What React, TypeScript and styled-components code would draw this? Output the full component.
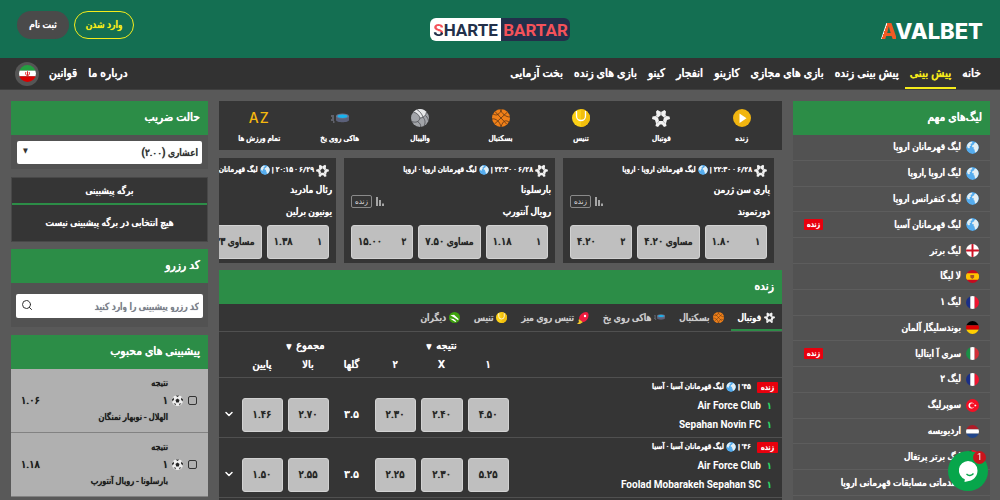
import React from "react";
import styled, { createGlobalStyle, css } from "styled-components";
import { ChevronDown, Search } from "lucide-react";

const Global = createGlobalStyle`
  *, *::before, *::after { box-sizing: border-box; }
  html { scrollbar-width: none; }
  body {
    margin: 0;
    background: #595959;
    color: #fff;
    font-family: Roboto, "DejaVu Sans Condensed", "DejaVu Sans", sans-serif;
    font-size: 11px;
    line-height: 16px;
  }
  button, input, select { font: inherit; color: inherit; margin: 0; }
  button { border: 0; padding: 0; cursor: pointer; background: none; }
  a { color: inherit; text-decoration: none; }
  ul { list-style: none; margin: 0; padding: 0; }
  h2 { margin: 0; }
  svg { display: block; flex: none; }
`;

/* Firm text: regular letterforms with a doubled edge, lighter than true bold. */
const firm = css`
  font-weight: 400;
  text-shadow: 0 0 0 currentColor, 0 0 1px currentColor;
`;

const Page = styled.div`
  direction: rtl;
  min-height: 100vh;
  overflow: hidden;
`;

/* ---------- header ---------- */

const Header = styled.header`
  display: grid;
  grid-template-columns: 1fr auto 1fr;
  align-items: start;
  height: 58px;
  padding: 0 17px;
  background: #146f52;
`;

const Brand = styled.a`
  justify-self: start;
  padding-top: 18px;
  direction: ltr;
  font: 800 22px/26px Inter, sans-serif;
`;

const BrandMark = styled.span`
  color: transparent;
  background: linear-gradient(110deg, #fff 36%, #f15a24 37%);
  background-clip: text;
`;

const Partner = styled.a`
  display: flex;
  direction: ltr;
  height: 23px;
  margin-top: 18px;
  border-radius: 6px;
  overflow: hidden;
  font: 700 17px/24px Roboto, sans-serif;
`;

const PartnerHalf = styled.span<{ $dark?: boolean }>`
  width: ${(p) => (p.$dark ? 69 : 71)}px;
  text-align: center;
  white-space: nowrap;
  color: ${(p) => (p.$dark ? "#f4525a" : "#22304a")};
  background: ${(p) => (p.$dark ? "#22304a" : "#fff")};
`;

const PartnerMark = styled.span`
  color: transparent;
  background: linear-gradient(200deg, #f4525a 55%, #22304a 56%);
  background-clip: text;
`;

const Account = styled.div`
  justify-self: end;
  display: flex;
  gap: 5px;
  padding-top: 11px;
`;

const AccountButton = styled.button<{ $outline?: boolean }>`
  height: 28px;
  width: ${(p) => (p.$outline ? 60 : 52)}px;
  border-radius: 14px;
  font-size: 10px;
  ${firm}
  ${(p) =>
    p.$outline
      ? css`border: 1px solid #f5ec1b; color: #f5ec1b;`
      : css`background: #4a4a4a; color: #fff;`}
`;

const Nav = styled.nav`
  display: flex;
  align-items: stretch;
  gap: 1px;
  height: 32px;
  padding: 0 14px 0 15px;
  background: #323232;
  border-bottom: 1px solid #3f3f3f;
`;

const NavLink = styled.a<{ $active?: boolean }>`
  padding: 0 5px;
  font-size: 12px;
  line-height: 31px;
  ${firm}
  white-space: nowrap;
  color: ${(p) => (p.$active ? "#f5ec1b" : "#fff")};
  ${(p) => p.$active && css`border-bottom: 2px solid #f5ec1b;`}
`;

const NavSpacer = styled.span`
  flex: 1;
`;

const LanguageButton = styled.button`
  align-self: center;
  display: grid;
  place-items: center;
  width: 24px;
  height: 24px;
  margin-right: 4px;
  border-radius: 50%;
  background: #555;
`;

/* ---------- shared ---------- */

const Columns = styled.div`
  display: grid;
  grid-template-columns: 197px minmax(0, 1fr) 197px;
  gap: 11px;
  align-items: start;
  padding: 11px 10px 0 11px;
`;

const Stack = styled.div`
  display: flex;
  flex-direction: column;
  gap: 8px;
  min-width: 0;
`;

const Panel = styled.section`
  background: #525252;
`;

const Title = styled.h2`
  display: block;
  height: 34px;
  padding: 0 8px;
  background: #2c8d47;
  font-size: 12px;
  line-height: 33px;
  ${firm}
`;

const LiveTag = styled.span<{ $wide?: boolean }>`
  padding: 0 ${(p) => (p.$wide ? 4 : 3)}px;
  border-radius: 1px;
  background: #e8000d;
  color: #fff;
  font-size: 8px;
  line-height: 11px;
  ${firm}
`;

const Round = styled.svg`
  border-radius: 50%;
`;

/* ---------- leagues ---------- */

const LeaguePanel = styled(Panel)`
  padding-bottom: 24px;
`;

const LeagueList = styled.ul`
  display: grid;
  grid-auto-rows: 1fr;
  height: 361px;
`;

const League = styled.li`
  display: flex;
  align-items: center;
  gap: 5px;
  padding: 0 11px;
  border-bottom: 1px solid #5d5d5d;
  font-size: 10px;
  ${firm}
  white-space: nowrap;

  ${LiveTag} { margin-right: auto; }
`;

/* ---------- sports bar ---------- */

const Sports = styled.nav`
  display: grid;
  grid-template-columns: repeat(7, 1fr);
  height: 49px;
  background: #353535;
`;

const Sport = styled.a`
  display: grid;
  grid-template-rows: 18px 12px;
  place-items: center;
  align-content: start;
  gap: 6px;
  padding-top: 8px;
  font-size: 8px;
  line-height: 12px;
  ${firm}
`;

const AllSports = styled.span`
  font: 500 14px/18px Inter, sans-serif;
  letter-spacing: 1px;
  text-shadow: none;
  color: #f5b80e;
  direction: ltr;
`;

/* ---------- match cards ---------- */

const Carousel = styled.div`
  display: flex;
  gap: 8px;
  padding-right: 8px;
  overflow: hidden;
`;

const Card = styled.article`
  flex: 0 0 211px;
  height: 105px;
  padding: 5px 7px 0;
  background: #353535;
`;

const CardMeta = styled.div`
  display: flex;
  align-items: center;
  gap: 2px;
  height: 14px;
  font-size: 8px;
  ${firm}
  white-space: nowrap;
`;

const CardBody = styled.div`
  display: flex;
  align-items: center;
  gap: 4px;
  height: 48px;
`;

const CardTeams = styled.div`
  flex: 1;
  margin-right: -3px;
  font-size: 10px;
  line-height: 22px;
  ${firm}
`;

const LiveOutline = styled.span`
  padding: 0 3px;
  border: 1px solid #8a8a8a;
  border-radius: 2px;
  font-size: 8px;
  line-height: 11px;
  color: #ddd;
`;

const CardOdds = styled.div`
  display: grid;
  grid-template-columns: repeat(3, 1fr);
  gap: 5px;
`;

const oddsSurface = css`
  height: 34px;
  border: 1px solid #d2d2d2;
  border-radius: 3px;
  background: #bfbfbf;
  color: #262626;
  font-size: 11px;
  ${firm}
`;

const CardOdd = styled.button`
  ${oddsSurface}
  display: flex;
  justify-content: space-between;
  align-items: center;
  padding: 0 6px;

  span:first-child { font-size: 10px; }
`;

/* ---------- live table ---------- */

const LivePanel = styled.section`
  margin-top: -1px;
  padding-bottom: 24px;
  background: #353535;
`;

const Tabs = styled.div`
  display: flex;
  height: 28px;
  border-bottom: 1px solid #505050;
`;

const Tab = styled.button<{ $active?: boolean }>`
  display: flex;
  align-items: center;
  gap: 3px;
  padding: 0 7px;
  font-size: 10px;
  color: ${(p) => (p.$active ? "#fff" : "#ccc")};
  white-space: nowrap;
  ${firm}
  ${(p) => p.$active && css`box-shadow: inset 0 -2px #2c8d47;`}
`;

const Table = styled.table`
  width: 100%;
  table-layout: fixed;
  border-collapse: collapse;
  text-align: center;

  th, td { padding: 0; }
  th { height: 18px; font-size: 11px; line-height: 18px; ${firm} }
  thead tr:first-child th { height: 23px; padding-top: 5px; }
  thead tr:last-child th { height: 21px; padding-bottom: 3px; }
  tbody tr { height: 60px; border-top: 1px solid #505050; }
  tbody tr:last-child { border-bottom: 1px solid #505050; }
`;

const Col = styled.col<{ $w?: number }>`
  ${(p) => p.$w && css`width: ${p.$w}px;`}
`;

const Sort = styled.button`
  ${firm}
`;

const Caret = styled.span`
  font-size: 7px;
  margin-right: 5px;
`;

const EventCell = styled.td`
  text-align: right;
  vertical-align: top;
`;

const EventMeta = styled.div`
  display: flex;
  align-items: center;
  gap: 2px;
  padding-right: 4px;
  height: 18px;
  font-size: 8px;
  ${firm}
  white-space: nowrap;

  ${LiveTag} { margin-left: 4px; }
`;

const Team = styled.div`
  display: flex;
  gap: 7px;
  padding-right: 10px;
  line-height: 19px;
  font-size: 10px;
  font-weight: 700;
`;

const Score = styled.span`
  width: 4px;
  color: #2fd467;
`;

const OddCell = styled.td`
  vertical-align: bottom;
`;

const Odd = styled.button`
  ${oddsSurface}
  display: block;
  width: calc(100% - 5px);
  margin: 0 auto 5px;
`;

const Goals = styled.td`
  && { padding-top: 14px; }
  font-size: 11px;
  font-weight: 700;
`;

const ExpandCell = styled.td`
  && { padding-top: 13px; }

  button { display: block; margin: 0 auto; }
`;

/* ---------- left column ---------- */

const Field = styled.div<{ $roomy?: boolean }>`
  position: relative;
  display: flex;
  padding: ${(p) => (p.$roomy ? "11px 5px 9px" : "6px 6px 5px")};
`;

const fieldSurface = css`
  width: 100%;
  border: 0;
  border-radius: 2px;
  background: #fff;
  color: #333;
  font-size: 10px;
`;

const Select = styled.select`
  ${fieldSurface}
  appearance: none;
  height: 23px;
  padding: 0 4px;
  ${firm}
`;

const SelectCaret = styled.span`
  position: absolute;
  left: 12px;
  top: 8px;
  font-size: 7px;
  color: #333;
  pointer-events: none;
`;

const CodeInput = styled.input`
  ${fieldSurface}
  height: 24px;
  padding: 0 4px 0 28px;

  &::placeholder { color: #7b7f8a; opacity: 1; ${firm} }
`;

const SearchButton = styled.button`
  position: absolute;
  left: 10px;
  top: 16px;
  color: #333;
`;

const Slip = styled.section`
  background: #353535;
  text-align: center;
  border: 1px solid #484848;
  margin-bottom: -1px;
`;

const SlipTab = styled.h2`
  height: 27px;
  border-bottom: 2px solid #2c8d47;
  font-size: 10px;
  line-height: 25px;
  ${firm}
`;

const SlipText = styled.p`
  margin: 0;
  font-size: 10px;
  line-height: 36px;
  ${firm}
`;

const Popular = styled.li`
  display: grid;
  grid-template-columns: auto auto 1fr auto;
  align-items: center;
  gap: 0 5px;
  height: 64px;
  padding: 0 11px 0 10px;
  border-bottom: 1px solid #828282;
  background: #b0b0b0;
  color: #1c1c1c;
  font-size: 11px;
  ${firm}
`;

const Check = styled.input`
  appearance: none;
  width: 9px;
  height: 9px;
  margin: 0;
  border: 1px solid #333;
  border-radius: 2px;
`;

const Pick = styled.label`
  margin-right: -1px;
  line-height: 17px;
`;

const Small = styled.span`
  display: block;
  font-size: 9px;
`;

/* ---------- chat ---------- */

const Chat = styled.button`
  position: fixed;
  right: 12px;
  bottom: 9px;
  display: grid;
  place-items: center;
  width: 40px;
  height: 40px;
  border-radius: 50%;
  background: #07a64b;
`;

const ChatCount = styled.span`
  position: absolute;
  top: 0;
  right: 2px;
  width: 13px;
  height: 13px;
  border-radius: 50%;
  background: #c8141b;
  color: #fff;
  font-size: 9px;
  line-height: 13px;
`;

/* ---------- drawings ---------- */

const Globe = ({ size = 13 }: { size?: number }) => (
  <Round width={size} height={size} viewBox="0 0 26 26" aria-hidden="true">
    <circle cx="13" cy="13" r="13" fill="#55acee" />
    <path d="M2 9C4 4 7 2 11 1l2 3-4 2 1 3-3 2 1 2-2 2-3-2zM13 8l3-1 1-3 3-1 5 6v6l-3 6-4 2-1-6-2-1 1-3-4-1z" fill="#e4eef2" />
  </Round>
);

const bands: Record<string, { colors: string[]; upright?: boolean }> = {
  fr: { colors: ["#1b2f86", "#fff", "#f0142f"], upright: true },
  it: { colors: ["#1a8f46", "#fff", "#d22f37"], upright: true },
  de: { colors: ["#000", "#dd0000", "#ffce00"] },
  nl: { colors: ["#ae1c28", "#fff", "#21468b"] },
  ir: { colors: ["#239f40", "#fff", "#da0000"] },
  es: { colors: ["#c60b1e", "#ffc400", "#c60b1e"] },
};

const Flag = ({ code, size = 13 }: { code: string; size?: number }) => {
  const band = bands[code];
  return (
    <Round width={size} height={size} viewBox="0 0 12 12" aria-hidden="true">
      {band?.colors.map((fill, i) =>
        band.upright ? (
          <rect key={i} x={i * 4} width="4" height="12" fill={fill} />
        ) : (
          <rect key={i} y={i * 4} width="12" height="4" fill={fill} />
        )
      )}
      {code === "es" && (
        <>
          <rect y="3" width="12" height="6" fill="#ffc400" />
          <path d="M4 4.500h3.500v2.500L5.800 8.200 4 7z" fill="#a5502a" />
        </>
      )}
      {code === "ir" && <path d="M6 4.400v3M4.800 5c-.6 2 .6 2.400 1.200 2.400S7.800 7 7.200 5" stroke="#da0000" strokeWidth=".6" fill="none" />}
      {code === "en" && (
        <>
          <rect width="12" height="12" fill="#fff" />
          <path d="M6 0v12M0 6h12" stroke="#ce1124" strokeWidth="1.800" />
        </>
      )}
      {code === "pt" && (
        <>
          <rect width="12" height="12" fill="#e8112d" />
          <rect width="5" height="12" fill="#046a38" />
        </>
      )}
      {code === "tr" && (
        <>
          <rect width="12" height="12" fill="#f50f24" />
          <circle cx="5" cy="6" r="2.700" fill="#fff" />
          <circle cx="5.800" cy="6" r="2.100" fill="#f50f24" />
          <path d="M8.600 4.800l.4.800.8.400-.8.400-.4.800-.3-.8-.8-.4.800-.4z" fill="#fff" />
        </>
      )}
    </Round>
  );
};

const Football = ({ size = 18 }: { size?: number }) => (
  <svg width={size} height={size} viewBox="0 0 36 36" aria-hidden="true">
    <path
      d="M11 2l7 4 7-4 3 3-1 7 2 2 6 1 1 5-6 2-2 7 1 5-5 2-4-5h-4l-4 5-5-2 1-5-2-7-6-2 1-5 6-1 2-2-1-7z"
      fill="#f2f2f2"
    />
    <path d="M18 12l6 5-2 7h-8l-2-7z" fill="#353535" />
    <path d="M18 12V6M24 17l5-3M22 24l4 5M14 24l-4 5M12 17l-5-3" stroke="#777" strokeWidth="1" />
  </svg>
);

const DarkFootball = () => (
  <svg width="11" height="11" viewBox="0 0 22 22" aria-hidden="true">
    <circle cx="11" cy="11" r="11" fill="#eee" />
    <path d="M11 7l4 3-1.500 5h-5L7 10zM7 1h8l-4 3zM0 9l3-4 1 4-3 4zM22 9l-3-4-1 4 3 4zM3 17l4 0 1 4zM19 17l-4 0-1 4z" fill="#222" />
  </svg>
);

const PlayIcon = () => (
  <svg width="18" height="18" viewBox="0 0 18 18" aria-hidden="true">
    <circle cx="9" cy="9" r="9" fill="#f1b510" />
    <path d="M6.500 4.500l7 4.700-7 4.700z" fill="#fff" />
  </svg>
);

const Tennis = ({ size = 18 }: { size?: number }) => (
  <svg width={size} height={size} viewBox="0 0 18 18" aria-hidden="true">
    <circle cx="9" cy="9" r="9" fill="#fcd116" />
    <path d="M9 0a9 9 0 0 1 0 18z" fill="#f2bf0d" />
    <path d="M4.500 2v5a4.500 4.500 0 0 0 9 0V2" stroke="#fff" strokeWidth="1.300" fill="none" />
  </svg>
);

const Basketball = ({ size = 18 }: { size?: number }) => (
  <svg width={size} height={size} viewBox="0 0 18 18" aria-hidden="true">
    <circle cx="9" cy="9" r="9" fill="#f08019" />
    <path
      d="M3 2.500l12 13M15.500 3L2.500 15M8 0c2 5 6 8 10 8M0 10c4-1 8 3 9 8M1 5c4 2 6 1 9-5M17 13c-3-2-6-2-8 5"
      stroke="#5a3314"
      strokeWidth=".8"
      fill="none"
    />
  </svg>
);

const Volleyball = () => (
  <svg width="18" height="18" viewBox="0 0 18 18" aria-hidden="true">
    <circle cx="9" cy="9" r="9" fill="#a2a4a9" />
    <path d="M2.500 3C6-1 12-1 15.500 3 15 6.500 12 9 9 9 8 6 6 4 2.500 3z" fill="#e6e7e9" />
    <path
      d="M9 9C8 6 6 4 2.500 3M12 8.200C11 5 9 2.500 6 .6M9 9c3 0 6-2 6.500-6M9 9c-1 4-4 5-8.500 3.500M6.500 12.500C9 14 10 16 9.500 18M12 8.200c2.500 3 2.500 6 1 9M14.500 6.500c2 2 3 4 3 6"
      stroke="#4b4d52"
      strokeWidth=".8"
      fill="none"
    />
  </svg>
);

const Puck = ({ width = 18 }: { width?: number }) => (
  <svg width={width} height={(width * 10) / 18} viewBox="0 0 18 10" aria-hidden="true">
    <path d="M5 3v4c0 3 13 3 13 0V3z" fill="#5b6079" />
    <ellipse cx="11.500" cy="3.200" rx="6.500" ry="2.600" fill="#6c728d" />
    <ellipse cx="11.500" cy="3.200" rx="5" ry="1.700" fill="#19b3ee" />
    <path d="M0 3h3M1 5h2M0 7h3M2 9h1.500" stroke="#8a8da0" strokeWidth="1" />
  </svg>
);

const Paddle = () => (
  <svg width="12" height="12" viewBox="0 0 12 12" aria-hidden="true">
    <path d="M3 9L0 12l3 0 3-2z" fill="#f3c62b" />
    <path d="M2 7c0-4 4-7 7-7 2 0 3 2 2.500 4C11 8 8 10 5.500 10z" fill="#ee1c3f" />
    <path d="M2 7l3.500 3L3 11 1.500 9z" fill="#f3c62b" />
    <circle cx="8" cy="4" r="1.200" fill="#fff" />
  </svg>
);

const Others = () => (
  <svg width="11" height="11" viewBox="0 0 12 12" aria-hidden="true">
    <circle cx="6" cy="6" r="6" fill="#3ea30e" />
    <path d="M1.500 3.500l4-.5 5 4.500-.5 1.500-4.500-3zM1 7l4 .5 3 2.500-1 1-3-2z" fill="#fff" />
  </svg>
);

const StatsIcon = () => (
  <svg width="9" height="10" viewBox="0 0 9 10" aria-hidden="true">
    <path d="M1 1v9M4 4v6M7 7.500V10" stroke="#ccc" strokeWidth="1.500" />
  </svg>
);

const ChatBubble = () => (
  <svg width="22" height="23" viewBox="0 0 22 23" aria-hidden="true">
    <path d="M11 1a9.500 9.500 0 0 1 9.500 9.500c0 5-3 8.500-6.500 10L7.500 22l.3-2.700A9.500 9.500 0 0 1 11 1z" fill="#fff" />
    <path d="M9.500 14c2 2.200 5 2 7-.5" stroke="#07a64b" strokeWidth="1.300" fill="none" />
  </svg>
);

/* ---------- data ---------- */

const navItems = ["خانه", "پیش بینی", "پیش بینی زنده", "بازی های مجازی", "کازینو", "انفجار", "کینو", "بازی های زنده", "بخت آزمایی"];

const leagues: { name: string; flag?: string; live?: boolean }[] = [
  { name: "لیگ قهرمانان اروپا" },
  { name: "لیگ اروپا ,اروپا" },
  { name: "لیگ کنفرانس اروپا" },
  { name: "لیگ قهرمانان آسیا", live: true },
  { name: "لیگ برتر", flag: "en" },
  { name: "لا لیگا", flag: "es" },
  { name: "لیگ ۱", flag: "fr" },
  { name: "بوندسلیگا, آلمان", flag: "de" },
  { name: "سری آ ایتالیا", flag: "it", live: true },
  { name: "لیگ ۲", flag: "fr" },
  { name: "سوپرلیگ", flag: "tr" },
  { name: "اردیویسه", flag: "nl" },
  { name: "لیگ برتر پرتغال", flag: "pt" },
  { name: "مقدماتی مسابقات قهرمانی اروپا" },
];

const sports: [React.ReactNode, string][] = [
  [<PlayIcon />, "زنده"],
  [<Football />, "فوتبال"],
  [<Tennis />, "تنیس"],
  [<Basketball />, "بسکتبال"],
  [<Volleyball />, "والیبال"],
  [<Puck />, "هاکی روی یخ"],
];

const cards = [
  { date: "۶/۲۸ · ۲۲:۳۰", home: "پاری سن ژرمن", away: "دورتموند", odds: ["۱.۸۰", "۴.۲۰", "۴.۲۰"], tools: true },
  { date: "۶/۲۸ · ۲۲:۳۰", home: "بارسلونا", away: "رویال آنتورپ", odds: ["۱.۱۸", "۷.۵۰", "۱۵.۰۰"], tools: true },
  { date: "۶/۲۹ · ۲۰:۱۵", home: "رئال مادرید", away: "یونیون برلین", odds: ["۱.۳۸", "۵.۳۳"], tools: false },
];
const outcomes = ["۱", "مساوی", "۲"];

const tabs: [React.ReactNode, string][] = [
  [<Football size={11} />, "فوتبال"],
  [<Basketball size={11} />, "بسکتبال"],
  [<Puck width={11} />, "هاکی روی یخ"],
  [<Paddle />, "تنیس روی میز"],
  [<Tennis size={11} />, "تنیس"],
  [<Others />, "دیگران"],
];

const matches = [
  { minute: "۴۵'", home: "Air Force Club", away: "Sepahan Novin FC", result: ["۴.۵۰", "۲.۴۰", "۲.۳۰"], total: ["۲.۷۰", "۱.۴۶"] },
  { minute: "۴۶'", home: "Air Force Club", away: "Foolad Mobarakeh Sepahan SC", result: ["۵.۲۵", "۲.۳۰", "۲.۲۵"], total: ["۲.۵۵", "۱.۵۰"] },
];

const popular = [
  { id: "pick-1", teams: "الهلال - نوبهار نمنگان", odd: "۱.۰۶" },
  { id: "pick-2", teams: "بارسلونا - رویال آنتورپ", odd: "۱.۱۸" },
];

export default function App() {
  return (
    <Page lang="fa">
      <Global />
      <Header>
        <Brand href="#">
          <BrandMark>A</BrandMark>VALBET
        </Brand>
        <Partner href="#">
          <PartnerHalf>
            <PartnerMark>S</PartnerMark>HARTE
          </PartnerHalf>
          <PartnerHalf $dark>BARTAR</PartnerHalf>
        </Partner>
        <Account>
          <AccountButton $outline>وارد شدن</AccountButton>
          <AccountButton>ثبت نام</AccountButton>
        </Account>
      </Header>
      <Nav>
        {navItems.map((item, i) => (
          <NavLink key={item} href="#" $active={i === 1}>{item}</NavLink>
        ))}
        <NavSpacer />
        <NavLink href="#">درباره ما</NavLink>
        <NavLink href="#">قوانین</NavLink>
        <LanguageButton aria-label="فارسی">
          <Flag code="ir" size={17} />
        </LanguageButton>
      </Nav>

      <Columns>
        <LeaguePanel>
          <Title>لیگ‌های مهم</Title>
          <LeagueList>
            {leagues.map((l) => (
              <League key={l.name}>
                {l.flag ? <Flag code={l.flag} /> : <Globe />}
                <a href="#">{l.name}</a>
                {l.live && <LiveTag>زنده</LiveTag>}
              </League>
            ))}
          </LeagueList>
        </LeaguePanel>

        <Stack as="main">
          <Sports>
            {sports.map(([icon, label]) => (
              <Sport key={label} href="#">{icon}<span>{label}</span></Sport>
            ))}
            <Sport href="#"><AllSports>AZ</AllSports><span>تمام ورزش ها</span></Sport>
          </Sports>

          <Carousel>
            {cards.map((c) => (
              <Card key={c.home}>
                <CardMeta>
                  <Football size={13} />
                  <span>{c.date} |</span>
                  <Globe size={10} />
                  <span>لیگ قهرمانان اروپا · اروپا</span>
                </CardMeta>
                <CardBody>
                  <CardTeams>
                    <div>{c.home}</div>
                    <div>{c.away}</div>
                  </CardTeams>
                  {c.tools && (
                    <>
                      <StatsIcon />
                      <LiveOutline>زنده</LiveOutline>
                    </>
                  )}
                </CardBody>
                <CardOdds>
                  {c.odds.map((o, i) => (
                    <CardOdd key={i}><span>{outcomes[i]}</span><span>{o}</span></CardOdd>
                  ))}
                </CardOdds>
              </Card>
            ))}
          </Carousel>

          <LivePanel>
            <Title>زنده</Title>
            <Tabs>
              {tabs.map(([icon, label], i) => (
                <Tab key={label} $active={i === 0}>{icon}{label}</Tab>
              ))}
            </Tabs>
            <Table>
              <colgroup>
                <Col /><Col $w={46} /><Col $w={47} /><Col $w={46} /><Col $w={41} /><Col $w={46} /><Col $w={46} /><Col $w={20} />
              </colgroup>
              <thead>
                <tr>
                  <th />
                  <th colSpan={3}><Sort>نتیجه<Caret>▼</Caret></Sort></th>
                  <th colSpan={3}><Sort>مجموع<Caret>▼</Caret></Sort></th>
                  <th />
                </tr>
                <tr>
                  <th />
                  <th>۱</th><th>X</th><th>۲</th><th>گلها</th><th>بالا</th><th>پایین</th>
                  <th />
                </tr>
              </thead>
              <tbody>
                {matches.map((m) => (
                  <tr key={m.away}>
                    <EventCell>
                      <EventMeta>
                        <LiveTag $wide>زنده</LiveTag>
                        <span>{m.minute} |</span>
                        <Globe size={10} />
                        <span>لیگ قهرمانان آسیا · آسیا</span>
                      </EventMeta>
                      <Team><Score>۱</Score>{m.home}</Team>
                      <Team><Score>۱</Score>{m.away}</Team>
                    </EventCell>
                    {m.result.map((o, i) => <OddCell key={i}><Odd>{o}</Odd></OddCell>)}
                    <Goals>۳.۵</Goals>
                    {m.total.map((o, i) => <OddCell key={i}><Odd>{o}</Odd></OddCell>)}
                    <ExpandCell>
                      <button aria-label="بیشتر"><ChevronDown size={12} strokeWidth={3} /></button>
                    </ExpandCell>
                  </tr>
                ))}
              </tbody>
            </Table>
          </LivePanel>
        </Stack>

        <Stack as="aside">
          <Panel>
            <Title as="label" htmlFor="odds-format">حالت ضریب</Title>
            <Field>
              <Select id="odds-format"><option>اعشاری (۲.۰۰)</option></Select>
              <SelectCaret>▼</SelectCaret>
            </Field>
          </Panel>
          <Slip>
            <SlipTab>برگه پیشبینی</SlipTab>
            <SlipText>هیچ انتخابی در برگه پیشبینی نیست</SlipText>
          </Slip>
          <Panel>
            <Title as="label" htmlFor="reserve-code">کد رزرو</Title>
            <Field $roomy>
              <CodeInput id="reserve-code" placeholder="کد رزرو پیشبینی را وارد کنید" />
              <SearchButton aria-label="جستجو"><Search size={12} /></SearchButton>
            </Field>
          </Panel>
          <Panel>
            <Title>پیشبینی های محبوب</Title>
            <ul>
              {popular.map((p) => (
                <Popular key={p.id}>
                  <Check type="checkbox" id={p.id} />
                  <DarkFootball />
                  <Pick htmlFor={p.id}>
                    <Small>نتیجه</Small>
                    ۱
                    <Small>{p.teams}</Small>
                  </Pick>
                  <span>{p.odd}</span>
                </Popular>
              ))}
            </ul>
          </Panel>
        </Stack>
      </Columns>

      <Chat aria-label="گفتگو">
        <ChatBubble />
        <ChatCount>1</ChatCount>
      </Chat>
    </Page>
  );
}
